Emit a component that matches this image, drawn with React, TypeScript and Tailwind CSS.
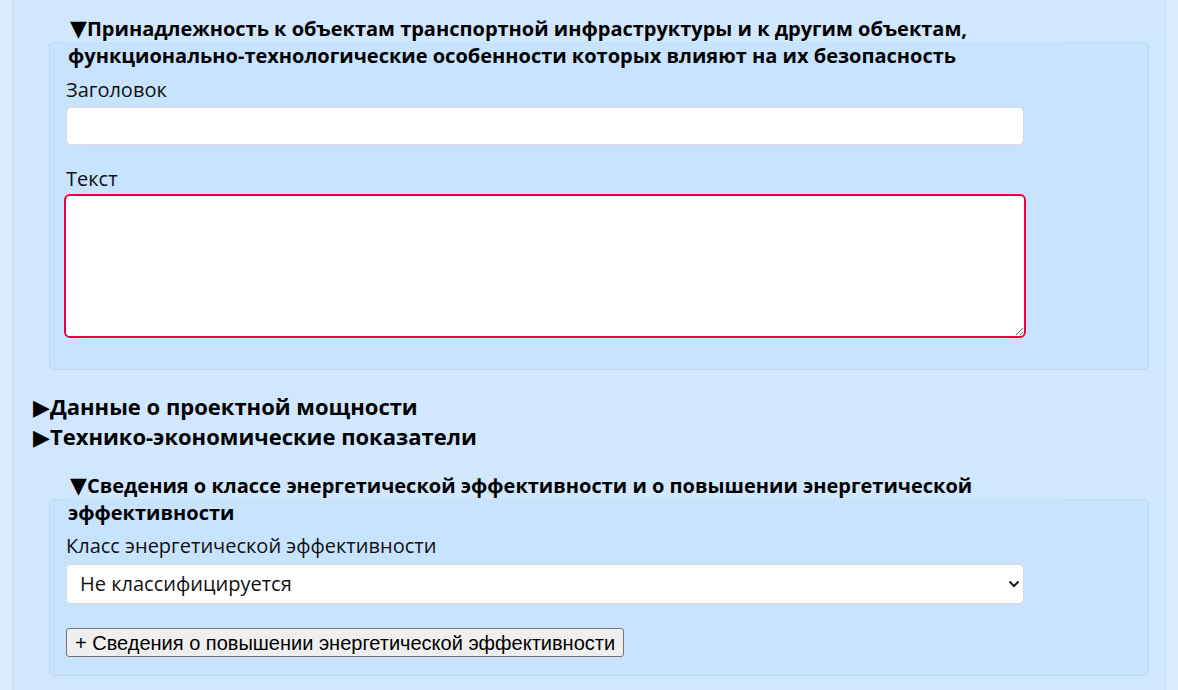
import * as React from "react";

const font = { fontFamily: '"Open Sans", "Noto Sans", sans-serif' };

const Legend: React.FC<{ children: React.ReactNode }> = ({ children }) => (
  <legend className="max-w-[1000px] px-0.5 text-[20px] font-bold leading-[27px] text-black">
    <span className="ml-0.5 font-['DejaVu_Sans'] text-[22px] leading-[0]">▼</span>
    {children}
  </legend>
);

const Collapsed: React.FC<{ title: string; className?: string }> = ({
  title,
  className = "",
}) => (
  <div className={`text-[22px] font-bold leading-[30px] text-black ${className}`}>
    <span className="font-['DejaVu_Sans'] leading-[0]">▶</span>
    {title}
  </div>
);

const Label: React.FC<{ className?: string; children: React.ReactNode }> = ({
  className = "",
  children,
}) => (
  <label className={`block text-[20px] leading-[30px] text-[#111] ${className}`}>
    {children}
  </label>
);

const Group: React.FC<{
  legend: string;
  className?: string;
  children: React.ReactNode;
}> = ({ legend, className = "", children }) => (
  <fieldset
    className={`ml-4 rounded-[5px] border border-[#bcd8f5] bg-[#c8e3fd] px-4 ${className}`}
  >
    <Legend>{legend}</Legend>
    {children}
  </fieldset>
);

export default function App() {
  return (
    <div className="min-h-screen bg-[#dbecff] px-3" style={font}>
      <div className="min-h-[690px] border-x border-[#c2dcf6] bg-[#d1e7fe] pl-5 pr-4 pt-[15px]">
        <Group
          legend="Принадлежность к объектам транспортной инфраструктуры и к другим объектам, функционально-технологические особенности которых влияют на их безопасность"
          className="pb-[31px]"
        >
          <Label className="mt-[6px]">Заголовок</Label>
          <input
            type="text"
            className="mt-0.5 block h-[38px] w-[958px] rounded-[5px] border border-[#dadada] bg-white px-3 text-[20px]"
          />
          <Label className="mt-[19px]">Текст</Label>
          <textarea className="-ml-0.5 block h-[144px] w-[962px] rounded-[6px] border-2 border-[#f2003d] bg-white px-3 py-2 text-[20px] outline-none" />
        </Group>

        <Collapsed title="Данные о проектной мощности" className="mt-[21px]" />
        <Collapsed title="Технико-экономические показатели" />

        <Group
          legend="Сведения о классе энергетической эффективности и о повышении энергетической эффективности"
          className="mt-[21px] pb-[18px]"
        >
          <Label className="mt-[5px]">Класс энергетической эффективности</Label>
          <div className="relative mt-[3px] w-[958px]">
            <select
              defaultValue="none"
              className="block h-[40px] w-full appearance-none rounded-[5px] border border-[#dadada] bg-white pl-[13px] pr-8 text-[20px] text-[#111]"
            >
              <option value="none">Не классифицируется</option>
              <option value="A">A</option>
              <option value="B">B</option>
              <option value="C">C</option>
            </select>
            <svg
              viewBox="0 0 12 8"
              className="pointer-events-none absolute right-[4px] top-[16px] h-[8px] w-[12px]"
            >
              <path d="M1.5 1.5 6 6l4.5-4.5" fill="none" stroke="#1a1a1a" strokeWidth="2" />
            </svg>
          </div>
          <button
            type="button"
            className="mt-6 block h-[29px] rounded-[3px] border border-[#767676] bg-[#efefef] px-2 font-['Liberation_Sans'] text-[20px] leading-none text-black"
          >
            + Сведения о повышении энергетической эффективности
          </button>
        </Group>
      </div>
    </div>
  );
}
